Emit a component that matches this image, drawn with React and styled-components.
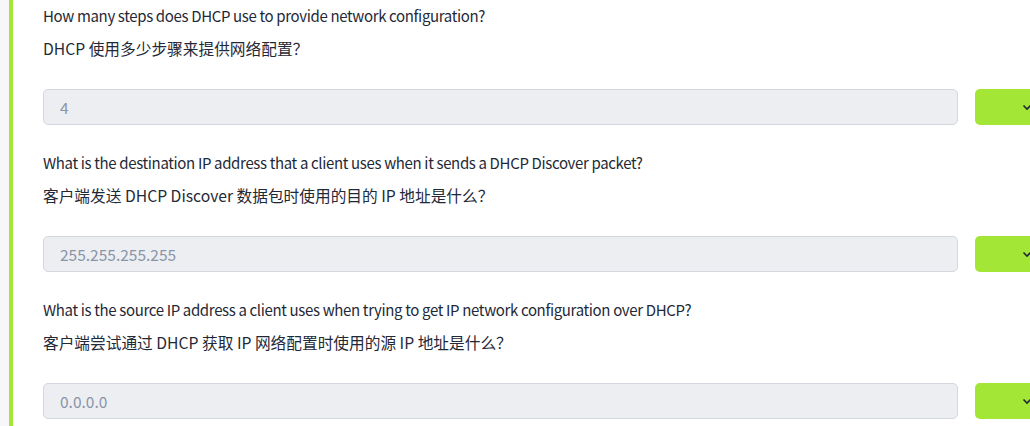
import styled, { createGlobalStyle } from "styled-components";

const GlobalStyle = createGlobalStyle`
  html, body {
    margin: 0;
    padding: 0;
    background: #f7f7f9;
    overflow: hidden;
  }
  body {
    font-family: "Noto Sans CJK SC", "Noto Sans", sans-serif;
    color: #1f2937;
  }
`;

const Page = styled.div`
  padding-left: 9px;
  height: 426px;
`;

const Card = styled.section`
  width: 1120px;
  height: 100%;
  background: #ffffff;
  border-left: 4px solid #a3e635;
  padding: 4px 0 0 30px;
  box-sizing: border-box;
`;

const Question = styled.div`
  display: flex;
  flex-direction: column;
  margin-bottom: 26px;
`;

const Text = styled.p`
  margin: 0;
  font-size: ${(p) => (p.$zh ? "15.7px" : "15px")};
  letter-spacing: ${(p) => (p.$zh ? "0" : "-0.35px")};
  line-height: 24px;
  color: #1f2937;
  & + & {
    margin-top: 9px;
  }
`;

const AnswerRow = styled.div`
  display: grid;
  grid-template-columns: 915px 80px;
  gap: 17px;
  margin-top: 28px;
`;

const Answer = styled.div`
  height: 36px;
  box-sizing: border-box;
  background: #eceef2;
  border: 1px solid #d4d7dd;
  border-radius: 5px;
  padding: 0 16px;
  display: flex;
  align-items: center;
  font-size: 15.5px;
  color: #8a94a6;
`;

const Toggle = styled.button`
  height: 36px;
  border: none;
  border-radius: 5px;
  background: #a3e635;
  display: flex;
  align-items: center;
  padding: 0 0 0 47px;
  cursor: pointer;
`;

const Chevron = () => (
  <svg width="10" height="10" viewBox="0 0 10 10" fill="none">
    <path d="M1.5 3.5 L5 7 L8.5 3.5" stroke="#1f2937" strokeWidth="1.6" />
  </svg>
);

const questions = [
  {
    en: "How many steps does DHCP use to provide network configuration?",
    zh: "DHCP 使用多少步骤来提供网络配置？",
    answer: "4",
  },
  {
    en: "What is the destination IP address that a client uses when it sends a DHCP Discover packet?",
    zh: "客户端发送 DHCP Discover 数据包时使用的目的 IP 地址是什么？",
    answer: "255.255.255.255",
  },
  {
    en: "What is the source IP address a client uses when trying to get IP network configuration over DHCP?",
    zh: "客户端尝试通过 DHCP 获取 IP 网络配置时使用的源 IP 地址是什么？",
    answer: "0.0.0.0",
  },
];

export default function App() {
  return (
    <>
      <GlobalStyle />
      <Page>
        <Card>
          {questions.map((q) => (
            <Question key={q.answer}>
              <Text>{q.en}</Text>
              <Text $zh>{q.zh}</Text>
              <AnswerRow>
                <Answer>{q.answer}</Answer>
                <Toggle>
                  <Chevron />
                </Toggle>
              </AnswerRow>
            </Question>
          ))}
        </Card>
      </Page>
    </>
  );
}
